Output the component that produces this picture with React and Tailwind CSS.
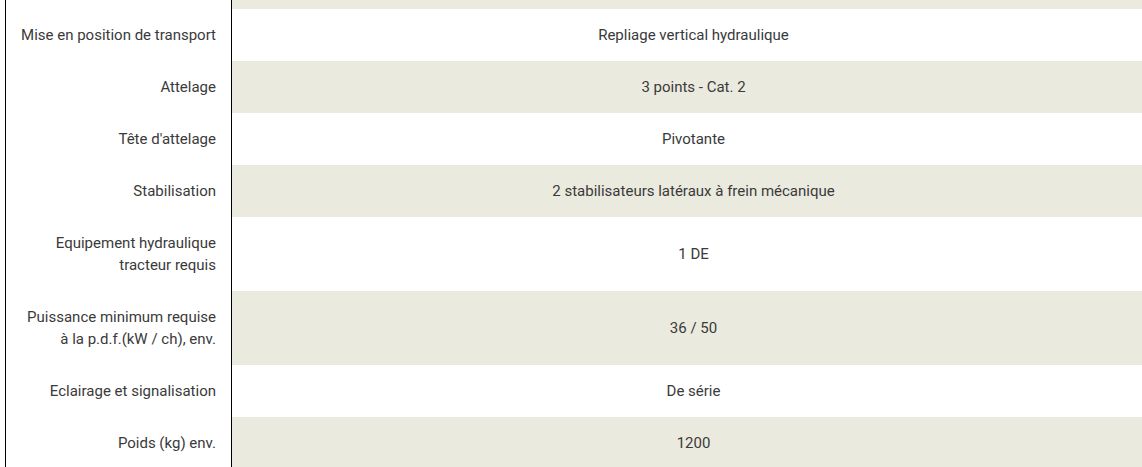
import React from "react";

const rows = [
  [["Mise en position de transport"], "Repliage vertical hydraulique"],
  [["Attelage"], "3 points - Cat. 2"],
  [["Tête d'attelage"], "Pivotante"],
  [["Stabilisation"], "2 stabilisateurs latéraux à frein mécanique"],
  [["Equipement hydraulique", "tracteur requis"], "1 DE"],
  [["Puissance minimum requise", "à la p.d.f.(kW / ch), env."], "36 / 50"],
  [["Eclairage et signalisation"], "De série"],
  [["Poids (kg) env."], "1200"],
];

export default function App() {
  return (
    <div className="w-[1142px] h-[467px] overflow-hidden bg-white text-[#3a3a3a] text-[15px] leading-[22px]" style={{ fontFamily: "Roboto, 'Noto Sans', sans-serif" }}>
      <div className="w-[1150px] ml-[5px] flex flex-col">
        <div className="flex h-[9px]">
          <div className="w-[227px] shrink-0 border-l border-r border-black bg-white" />
          <div className="flex-1 bg-[#ebeadf]" />
        </div>
        {rows.map(([label, value], i) => (
          <div key={i} className="flex">
            <div className="w-[227px] shrink-0 border-l border-r border-black bg-white py-[15px] pr-[15px] text-right">
              {label.map((l, j) => (
                <div key={j}>{l}</div>
              ))}
            </div>
            <div className={`flex-1 flex items-center justify-center py-[15px] ${i % 2 === 1 ? "bg-[#ebeadf]" : "bg-white"}`}>
              {value}
            </div>
          </div>
        ))}
      </div>
    </div>
  );
}
